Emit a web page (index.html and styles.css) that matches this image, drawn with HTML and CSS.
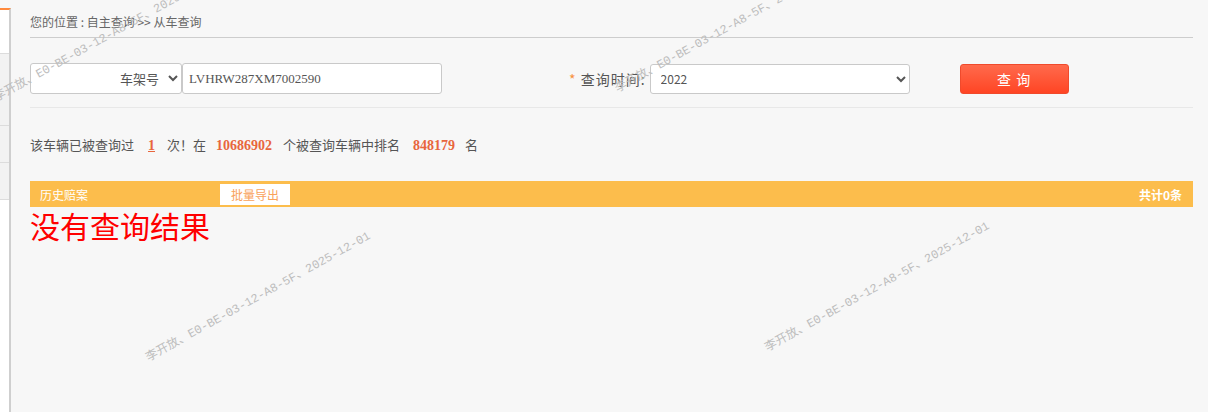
FILE: index.html
```html
<!DOCTYPE html>
<html lang="zh-CN">
   <head>
      <meta charset="UTF-8" />
      <title>从车查询</title>
      <link rel="stylesheet" href="styles.css">
   </head>
   <body>
      <!-- 左侧菜单（折叠） -->
      <div class="side-menu">
         <div class="side-item"></div>
         <div class="side-item tall gray"></div>
         <div class="side-item gray"></div>
         <div class="side-item gray"></div>
      </div>
      <!-- 主体 -->
      <div class="main">
         <div class="crumb">您的位置 : 自主查询 &gt;&gt; 从车查询</div>
         <div class="query-row">
            <select class="sel-type">
               <option>车架号</option>
            </select>
            <input class="txt-vin" type="text" value="LVHRW287XM7002590">
            <label class="lbl"><span class="req">*</span> 查询时间:</label>
            <select class="sel-year">
               <option>2022</option>
            </select>
            <button class="btn-query">查 询</button>
         </div>
         <div class="stat">
            该车辆已被查询过<u class="num first">1</u>次！在<b class="num">10686902</b>个被查询车辆中排名<b class="num wide">848179</b>名
         </div>
         <div class="bar">
            <span class="bar-title">历史赔案</span>
            <button class="btn-export">批量导出</button>
            <span class="bar-total">共计0条</span>
         </div>
         <div class="empty">没有查询结果</div>
      </div>
      <!-- 水印 -->
      <div class="wm" style="left:-2px;top:92px">李开放、E0-BE-03-12-A8-5F、2025-12-01</div>
      <div class="wm" style="left:619px;top:83px">李开放、E0-BE-03-12-A8-5F、2025-12-01</div>
      <div class="wm" style="left:150px;top:352px">李开放、E0-BE-03-12-A8-5F、2025-12-01</div>
      <div class="wm" style="left:769px;top:342px">李开放、E0-BE-03-12-A8-5F、2025-12-01</div>
   </body>
</html>
```
FILE: styles.css
```css
body {
margin: 0;
height: 412px;
overflow: hidden;
background: #f7f7f7;
display: flex;
position: relative;
font-family: "Noto Sans CJK SC", sans-serif;
color: #555;
}
.side-menu {
width: 9px;
margin-top: 8px;
background: #fff;
border-top: 2px solid #ff8a3d;
border-right: 2px solid #cfcfcf;
display: flex;
flex-direction: column;
}
.side-item {
height: 36px;
border-bottom: 1px solid #dcdcdc;
}
.side-item:first-child {
height: 43px;
}
.side-item.tall {
height: 71px;
}
.side-item.gray {
background: #f2f2f2;
}
.main {
flex: 1;
padding: 0 15px 0 19px;
}
.crumb {
height: 37px;
line-height: 43px;
font-size: 12px;
color: #666;
border-bottom: 1px solid #cdcdcd;
}
.query-row {
display: flex;
align-items: center;
margin-top: 25px;
padding-bottom: 13px;
border-bottom: 1px solid #e8e8e8;
}
.sel-type {
width: 152px;
height: 31px;
font-family: "Noto Sans CJK SC", sans-serif;
font-size: 13px;
color: #555;
text-align-last: right;
background: #fff;
border: 1px solid #c9c9c9;
border-radius: 3px;
padding: 0 6px;
}
.txt-vin {
box-sizing: border-box;
width: 260px;
height: 31px;
margin-left: 0;
border: 1px solid #c9c9c9;
border-radius: 3px;
padding: 0 6px;
font-family: "Liberation Serif", serif;
font-size: 13px;
color: #555;
background: #fff;
}
.lbl {
margin-left: 127px;
font-size: 14px;
letter-spacing: 1px;
color: #555;
}
.req {
color: #f7913d;
}
.sel-year {
width: 260px;
height: 30px;
margin-left: 4px;
font-family: "Noto Sans CJK SC", sans-serif;
font-size: 12px;
color: #555;
background: #fff;
border: 1px solid #c9c9c9;
border-radius: 3px;
padding: 0 6px;
}
.btn-query {
width: 109px;
height: 30px;
margin-left: 50px;
border: 1px solid #f04a2c;
border-radius: 3px;
background: linear-gradient(#ff6a4c, #ff4524);
color: #fff;
font-family: "Noto Sans CJK SC", sans-serif;
font-size: 14px;
letter-spacing: 1px;
}
.stat {
margin-top: 27px;
font-size: 13px;
line-height: 20px;
color: #555;
}
.num {
font-family: "Liberation Serif", serif;
font-weight: bold;
font-size: 14px;
color: #e8663d;
margin: 0 11px 0 10px;
}
.num.first {
margin: 0 12px 0 14px;
}
.num.wide {
margin: 0 10px 0 13px;
}
.bar {
margin-top: 25px;
height: 26px;
background: #fcbd4c;
display: flex;
align-items: center;
padding: 0 11px 0 10px;
font-size: 12px;
color: #fff;
}
.btn-export {
margin-left: 132px;
width: 70px;
height: 21px;
border: none;
background: #fff;
color: #f9a25a;
font-family: "Noto Sans CJK SC", sans-serif;
font-size: 12px;
padding: 0;
}
.bar-total {
margin-left: auto;
font-weight: bold;
}
.empty {
font-size: 30px;
line-height: 36px;
color: #ff0000;
}
.wm {
position: absolute;
font-family: "Liberation Mono", "Noto Sans CJK SC", monospace;
font-size: 12px;
line-height: 12px;
color: #bdbdbd;
white-space: nowrap;
transform-origin: 0 100%;
transform: rotate(-29deg);
pointer-events: none;
}
```
